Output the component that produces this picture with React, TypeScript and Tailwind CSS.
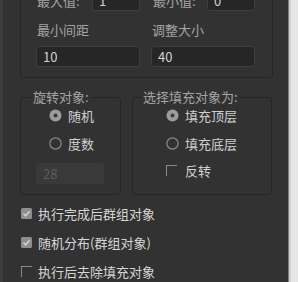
const font = { fontFamily: '"Noto Sans CJK SC", "Noto Sans", sans-serif' };

const Radio = ({ checked }: { checked: boolean }) => (
  <svg width="13" height="13" viewBox="0 0 13 13" className="shrink-0">
    {checked ? (
      <>
        <circle cx="6.5" cy="6.5" r="6" fill="#9c9c9c" />
        <circle cx="6.5" cy="6.5" r="2" fill="#3a3a3a" />
      </>
    ) : (
      <circle cx="6.5" cy="6.5" r="5.6" fill="none" stroke="#8c8c8c" strokeWidth="1.2" />
    )}
  </svg>
);

const Check = ({ checked }: { checked: boolean }) =>
  checked ? (
    <svg width="11" height="11" viewBox="0 0 11 11" className="shrink-0">
      <rect x="0" y="0" width="11" height="11" rx="1.5" fill="#8e8e8e" />
      <path d="M2.5 5.6 L4.6 7.8 L8.6 3.2" fill="none" stroke="#cfcfcf" strokeWidth="1.6" />
    </svg>
  ) : (
    <div className="w-[11px] h-[11px] shrink-0 border-t border-l border-[#8a8a8a]" />
  );

const Field = ({ value }: { value: string }) => (
  <div className="h-[21px] w-full bg-[#262626] border border-[#3d3d3d] rounded-[3px] pl-[6px] flex items-center text-[13px] text-[#d2d2d2]">
    {value}
  </div>
);

const App = () => {
  const options = [
    { label: "执行完成后群组对象", checked: true },
    { label: "随机分布(群组对象)", checked: true },
    { label: "执行后去除填充对象", checked: false },
  ];

  return (
    <div className="w-[298px] h-[282px] overflow-hidden flex bg-[#323232]" style={font}>
      <div className="w-[3px] shrink-0 bg-[#3d3d3d]" />
      <div className="flex-1 pl-[17px] leading-[15px]">
        {/* size group (top cut off) */}
        <div className="mt-[-34px] w-[253px] border border-[#262626] rounded-[3px] pl-[15px] pr-[17px] pt-[22px] pb-[10px]">
          <div className="grid grid-cols-2 gap-x-[11px]">
            <div className="flex items-center justify-between">
              <span className="text-[13px] text-[#a4a4a4] pl-[1px]">最大值:</span>
              <div className="w-[48px] h-[22px] bg-[#262626] border border-[#3d3d3d] rounded-[3px] pl-[6px] text-[13px] text-[#d2d2d2] flex items-center">1</div>
            </div>
            <div className="flex items-center justify-between">
              <span className="text-[13px] text-[#a4a4a4] pl-[2px]">最小值:</span>
              <div className="w-[48px] h-[22px] bg-[#262626] border border-[#3d3d3d] rounded-[3px] pl-[6px] text-[13px] text-[#d2d2d2] flex items-center">0</div>
            </div>
            <div className="mt-[11px] text-[13px] text-[#a4a4a4] pl-[1px]">最小间距</div>
            <div className="mt-[11px] text-[13px] text-[#a4a4a4] pl-[1px]">调整大小</div>
            <div className="mt-[9px]"><Field value="10" /></div>
            <div className="mt-[9px]"><Field value="40" /></div>
          </div>
        </div>

        {/* option groups */}
        <div className="flex gap-[11px] mt-[11px]">
          <fieldset className="w-[101px] h-[106px] border border-[#262626] rounded-[3px] p-0">
            <legend className="ml-[10px] px-[2px] text-[13px] leading-[16px] text-[#a4a4a4] whitespace-nowrap">旋转对象:</legend>
            <div className="pl-[15px]">
              <div className="flex items-center h-[20px] pl-[13px] gap-[6px] text-[13px] text-[#d0d0d0]">
                <Radio checked={true} />
                <span>随机</span>
              </div>
              <div className="flex items-center h-[20px] mt-[8px] pl-[13px] gap-[6px] text-[13px] text-[#d0d0d0]">
                <Radio checked={false} />
                <span>度数</span>
              </div>
              <div className="mt-[10px] w-[68px] h-[21px] bg-[#393939] rounded-[3px] pl-[7px] flex items-center text-[13px] text-[#5c5c5c]">28</div>
            </div>
          </fieldset>
          <fieldset className="w-[140px] h-[106px] border border-[#262626] rounded-[3px] p-0">
            <legend className="ml-[9px] px-[1px] text-[13px] leading-[16px] text-[#a4a4a4] whitespace-nowrap">选择填充对象为:</legend>
            <div className="pl-[33px]">
              <div className="flex items-center h-[20px] gap-[6px] text-[13px] text-[#d0d0d0]">
                <Radio checked={true} />
                <span>填充顶层</span>
              </div>
              <div className="flex items-center h-[20px] mt-[8px] gap-[6px] text-[13px] text-[#d0d0d0]">
                <Radio checked={false} />
                <span>填充底层</span>
              </div>
              <div className="flex items-center h-[20px] mt-[7px] gap-[8px] text-[13px] text-[#d0d0d0]">
                <Check checked={false} />
                <span>反转</span>
              </div>
            </div>
          </fieldset>
        </div>

        {/* bottom checkboxes */}
        <div className="flex flex-col gap-[9px] mt-[8px] pl-[1px]">
          {options.map((o, i) => (
            <div key={i} className="flex items-center h-[20px] gap-[6px] text-[13px] text-[#d6d6d6]">
              <Check checked={o.checked} />
              <span>{o.label}</span>
            </div>
          ))}
        </div>
      </div>
      <div className="w-[10px] shrink-0 flex">
        <div className="w-[1px] bg-[#7c7c7c]" />
        <div className="w-[2px] bg-[#d2d2d2]" />
        <div className="flex-1 bg-[#e6e6e6]" />
      </div>
    </div>
  );
};

export default App;
